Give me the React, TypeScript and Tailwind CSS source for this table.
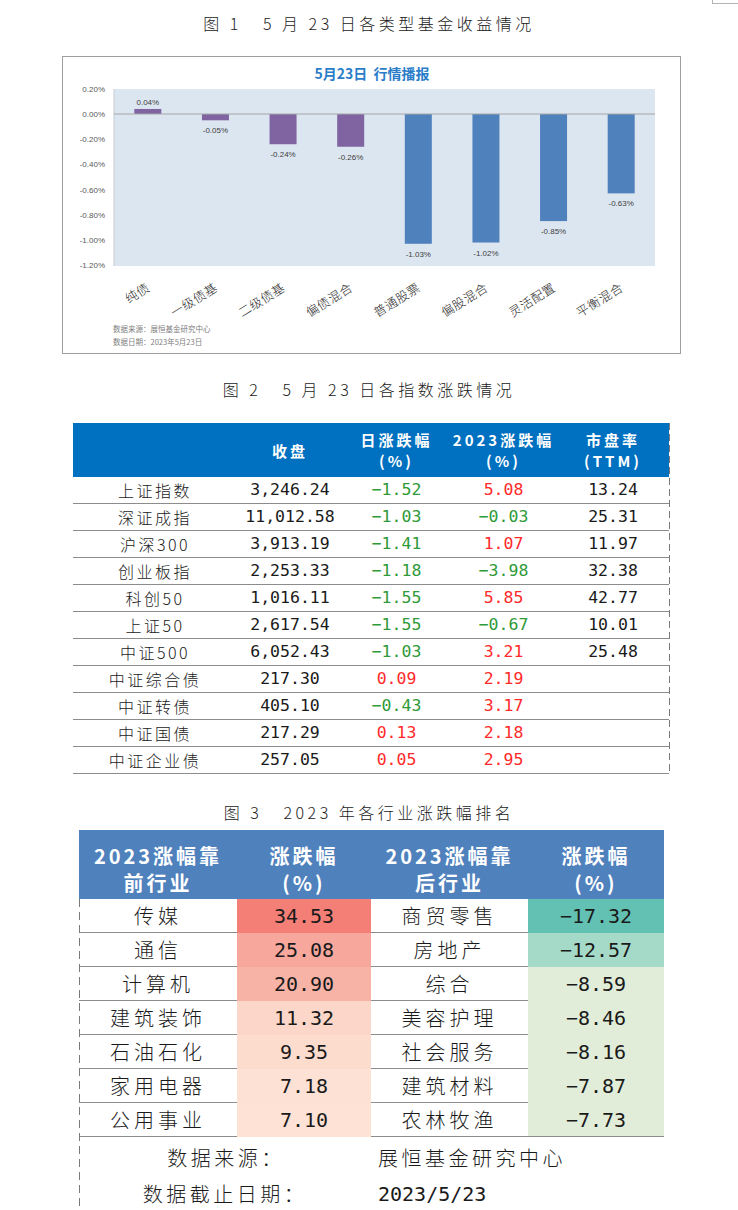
import React from "react";

const CJK = "font-['Noto_Sans_CJK_SC',sans-serif]";
const MONO = "font-['DejaVu_Sans_Mono','Liberation_Mono',monospace]";

const funds = [
  { name: "纯债", v: 0.04, color: "#8064a2" },
  { name: "一级债基", v: -0.05, color: "#8064a2" },
  { name: "二级债基", v: -0.24, color: "#8064a2" },
  { name: "偏债混合", v: -0.26, color: "#8064a2" },
  { name: "普通股票", v: -1.03, color: "#4f81bd" },
  { name: "偏股混合", v: -1.02, color: "#4f81bd" },
  { name: "灵活配置", v: -0.85, color: "#4f81bd" },
  { name: "平衡混合", v: -0.63, color: "#4f81bd" },
];

const indices = [
  ["上证指数", "3,246.24", "−1.52", "5.08", "13.24"],
  ["深证成指", "11,012.58", "−1.03", "−0.03", "25.31"],
  ["沪深300", "3,913.19", "−1.41", "1.07", "11.97"],
  ["创业板指", "2,253.33", "−1.18", "−3.98", "32.38"],
  ["科创50", "1,016.11", "−1.55", "5.85", "42.77"],
  ["上证50", "2,617.54", "−1.55", "−0.67", "10.01"],
  ["中证500", "6,052.43", "−1.03", "3.21", "25.48"],
  ["中证综合债", "217.30", "0.09", "2.19", ""],
  ["中证转债", "405.10", "−0.43", "3.17", ""],
  ["中证国债", "217.29", "0.13", "2.18", ""],
  ["中证企业债", "257.05", "0.05", "2.95", ""],
];

const sectors = [
  { top: "传媒", up: "34.53", upBg: "bg-[#f47f77]", bottom: "商贸零售", down: "−17.32", downBg: "bg-[#63c1b4]" },
  { top: "通信", up: "25.08", upBg: "bg-[#f7a79c]", bottom: "房地产", down: "−12.57", downBg: "bg-[#a6dac8]" },
  { top: "计算机", up: "20.90", upBg: "bg-[#f8b3a7]", bottom: "综合", down: "−8.59", downBg: "bg-[#e1edd9]" },
  { top: "建筑装饰", up: "11.32", upBg: "bg-[#fcd6c8]", bottom: "美容护理", down: "−8.46", downBg: "bg-[#e1edd9]" },
  { top: "石油石化", up: "9.35", upBg: "bg-[#fcdccd]", bottom: "社会服务", down: "−8.16", downBg: "bg-[#e1edd9]" },
  { top: "家用电器", up: "7.18", upBg: "bg-[#fde1d4]", bottom: "建筑材料", down: "−7.87", downBg: "bg-[#e1edd9]" },
  { top: "公用事业", up: "7.10", upBg: "bg-[#fde2d5]", bottom: "农林牧渔", down: "−7.73", downBg: "bg-[#e1edd9]" },
];

function FundChart() {
  const x0 = 51;
  const x1 = 592;
  const top = 32;
  const bottom = 209;
  const zero = 57;
  const k = 126;
  const cw = (x1 - x0) / 8;
  const ticks = [0.2, 0, -0.2, -0.4, -0.6, -0.8, -1.0, -1.2];

  return (
    <svg width="617" height="296" className="block">
      <text x={309} y={22} textAnchor="middle" fontSize="14" fontWeight="700" fill="#2a7dc9" fontFamily="Noto Sans CJK SC, sans-serif">
        5月23日&#160;&#160;行情播报
      </text>
      <rect x={x0} y={top} width={x1 - x0} height={bottom - top} fill="#dce6f1" />
      <line x1={x0} y1={top} x2={x0} y2={bottom} stroke="#c4cbd4" strokeWidth="1" />
      {ticks.map((t) => (
        <text key={t} x={42} y={zero - t * k + 3} textAnchor="end" fontSize="8" fill="#595959" fontFamily="Liberation Sans, sans-serif">
          {t.toFixed(2) === "-0.00" ? "0.00" : t.toFixed(2)}%
        </text>
      ))}
      {funds.map((f, i) => {
        const cx = x0 + cw * (i + 0.5);
        const h = Math.abs(f.v) * k;
        const y = f.v >= 0 ? zero - h : zero;
        const ly = f.v >= 0 ? y - 4 : y + h + 13;
        const ax = cx + 3;
        const ay = 233;
        return (
          <g key={f.name}>
            <rect x={cx - 13.5} y={y} width={27} height={h} fill={f.color} />
            <text x={cx} y={ly} textAnchor="middle" fontSize="8" fill="#404040" fontFamily="Liberation Sans, sans-serif">
              {f.v.toFixed(2)}%
            </text>
            <text
              x={ax}
              y={ay}
              textAnchor="end"
              fontSize="12.5"
              fontWeight="300"
              letterSpacing="0.5"
              fill="#262626"
              fontFamily="Noto Sans CJK SC, sans-serif"
              transform={`rotate(-32 ${ax} ${ay})`}
            >
              {f.name}
            </text>
          </g>
        );
      })}
      <line x1={x0} y1={zero} x2={x1} y2={zero} stroke="#a6a6a6" strokeWidth="1" />
      <text x={50} y={275} fontSize="7.5" fill="#808080" fontFamily="Noto Sans CJK SC, sans-serif">
        数据来源：展恒基金研究中心
      </text>
      <text x={50} y={288} fontSize="7.5" fill="#808080" fontFamily="Noto Sans CJK SC, sans-serif">
        数据日期：2023年5月23日
      </text>
    </svg>
  );
}

function signColor(v: string) {
  return v.startsWith("−") ? "text-[#2f9a38]" : "text-[#ff2a2a]";
}

export default function App() {
  return (
    <div className={`relative w-[738px] h-[1210px] overflow-hidden bg-white text-[#1a1a1a] ${CJK}`}>
      <div className="absolute top-0 right-0 w-[26px] h-[4px] border-l border-b border-[#b4b4b4]" />

      <div className="h-[56px] pt-[11px] text-center">
        <span className="whitespace-pre text-[16px] leading-[22px] tracking-[3.5px] font-light">图 1   5 月 23 日各类型基金收益情况</span>
      </div>

      <div className="ml-[62px] w-[619px] h-[298px] border border-[#9e9e9e]">
        <FundChart />
      </div>

      <div className="h-[69px] flex items-center justify-center">
        <span className="whitespace-pre text-[16px] leading-[22px] tracking-[3.5px] font-light">图 2   5 月 23 日各指数涨跌情况</span>
      </div>

      <div className="relative ml-[73px] w-[596px]">
        <div className="grid grid-cols-[164px_106px_107px_107px_112px] h-[54px] bg-[#0070c0] items-center text-center text-white font-bold text-[15px] leading-[21px] tracking-[3px]">
          <div />
          <div>收盘</div>
          <div>日涨跌幅<br />(%)</div>
          <div>2023涨跌幅<br />(%)</div>
          <div>市盘率<br />(TTM)</div>
        </div>
        {indices.map((r) => (
          <div key={r[0]} className="grid grid-cols-[164px_106px_107px_107px_112px] h-[27px] items-center text-center border-b border-[#8c8c8c]">
            <div className="text-[16px] tracking-[2.5px] font-light">{r[0]}</div>
            <div className={`${MONO} text-[16.5px]`}>{r[1]}</div>
            <div className={`${MONO} text-[16.5px] ${signColor(r[2])}`}>{r[2]}</div>
            <div className={`${MONO} text-[16.5px] ${signColor(r[3])}`}>{r[3]}</div>
            <div className={`${MONO} text-[16.5px]`}>{r[4]}</div>
          </div>
        ))}
        <div className="absolute top-0 bottom-0 right-[-1px] w-px bg-[repeating-linear-gradient(to_bottom,#7a7a7a_0_7px,transparent_7px_11px)]" />
      </div>

      <div className="h-[56px] pt-[26px] text-center">
        <span className="whitespace-pre text-[16px] leading-[22px] tracking-[3.5px] font-light">图 3   2023 年各行业涨跌幅排名</span>
      </div>

      <div className="relative ml-[79px] w-[585px]">
        <div className="grid grid-cols-[158px_134px_157px_136px] h-[69px] pt-[8px] bg-[#4f81bd] items-center text-center text-white font-bold text-[20px] leading-[27px] tracking-[3px]">
          <div>2023涨幅靠<br />前行业</div>
          <div>涨跌幅<br />(%)</div>
          <div>2023涨幅靠<br />后行业</div>
          <div>涨跌幅<br />(%)</div>
        </div>
        {sectors.map((s, i) => (
          <div key={s.top} className="grid grid-cols-[158px_134px_157px_136px] h-[34px] text-center">
            <div className="flex items-center justify-center border-b border-[#8c8c8c] text-[20px] tracking-[4px] font-light">{s.top}</div>
            <div className={`flex items-center justify-center ${s.upBg} ${MONO} text-[20px]`}>{s.up}</div>
            <div className="flex items-center justify-center border-b border-[#8c8c8c] text-[20px] tracking-[4px] font-light">{s.bottom}</div>
            <div className={`flex items-center justify-center ${s.downBg} ${MONO} text-[20px] ${i === sectors.length - 1 ? "border-b border-[#8c8c8c]" : ""}`}>{s.down}</div>
          </div>
        ))}
        <div className="grid grid-cols-[292px_293px] h-[42px] items-center text-[20px] tracking-[3.5px] font-light">
          <div className="text-center pl-[2px]">数据来源：</div>
          <div className="pl-[7px]">展恒基金研究中心</div>
        </div>
        <div className="grid grid-cols-[292px_293px] h-[30px] items-center text-[20px] tracking-[3.5px] font-light">
          <div className="text-center">数据截止日期：</div>
          <div className={`pl-[7px] ${MONO} tracking-normal font-normal`}>2023/5/23</div>
        </div>
        <div className="absolute top-[69px] bottom-[-40px] left-0 w-px bg-[repeating-linear-gradient(to_bottom,#7a7a7a_0_8px,transparent_8px_13px)]" />
      </div>
    </div>
  );
}
